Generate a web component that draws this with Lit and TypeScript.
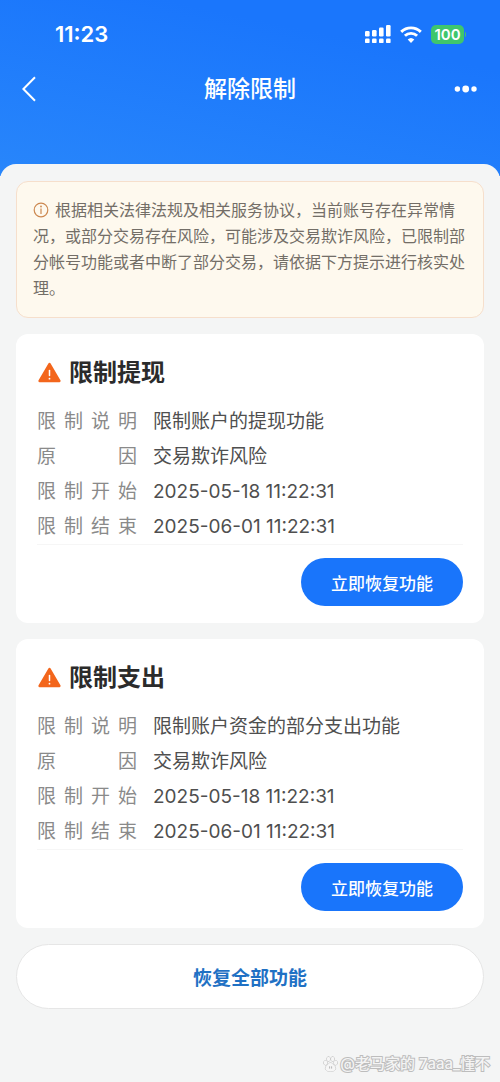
import { LitElement, html, css, svg } from "lit";
import { customElement, property } from "lit/decorators.js";

interface Restriction {
  title: string;
  rows: [string, string][];
}

const restrictions: Restriction[] = [
  {
    title: "限制提现",
    rows: [
      ["限制说明", "限制账户的提现功能"],
      ["原因", "交易欺诈风险"],
      ["限制开始", "2025-05-18 11:22:31"],
      ["限制结束", "2025-06-01 11:22:31"],
    ],
  },
  {
    title: "限制支出",
    rows: [
      ["限制说明", "限制账户资金的部分支出功能"],
      ["原因", "交易欺诈风险"],
      ["限制开始", "2025-05-18 11:22:31"],
      ["限制结束", "2025-06-01 11:22:31"],
    ],
  },
];

@customElement("status-bar")
class StatusBar extends LitElement {
  static styles = css`
    :host {
      display: flex;
      align-items: center;
      justify-content: space-between;
      height: 36px;
      padding: 16px 34px 0 55px;
      color: #fff;
    }
    .time {
      font-size: 22px;
      font-weight: 600;
      line-height: 36px;
    }
    .icons {
      display: flex;
      align-items: center;
    }
    .icons svg {
      display: block;
    }
    .wifi {
      margin: 0 9px;
    }
    .battery {
      display: flex;
      align-items: center;
      gap: 1px;
    }
    .level {
      width: 33px;
      border-radius: 5px;
      background: #3fc66c;
      font-size: 15px;
      font-weight: 600;
      line-height: 19px;
      text-align: center;
    }
    .cap {
      width: 1px;
      height: 5px;
      border-radius: 0 1px 1px 0;
      background: #3fc66c;
    }
  `;

  render() {
    const bars = [0, 1, 2, 3].map(
      (i) => svg`
        <rect x=${i * 7} y=${[6, 5, 2.5, 0][i]} width="4.6" height=${[5.5, 6.5, 9, 11.5][i]} rx="1.2"/>
        <rect x=${i * 7} y="13.5" width="4.6" height="4.6" rx="1.2"/>`
    );
    return html`
      <span class="time">11:23</span>
      <div class="icons">
        <svg width="26" height="19" viewBox="0 0 26 19" fill="#fff" aria-hidden="true">${bars}</svg>
        <svg class="wifi" width="22" height="17" viewBox="0 0 22 17" fill="none" stroke="#fff" stroke-width="2.9" aria-hidden="true">
          <path d="M1.2 5.9a14 14 0 0 1 19.6 0" />
          <path d="M4.9 9.8a8.8 8.8 0 0 1 12.2 0" />
          <path d="M11 17l-3.3-3.6a4.9 4.9 0 0 1 6.6 0z" fill="#fff" stroke="none" />
        </svg>
        <div class="battery"><span class="level">100</span><span class="cap"></span></div>
      </div>
    `;
  }
}

@customElement("restriction-card")
class RestrictionCard extends LitElement {
  @property({ attribute: false }) item!: Restriction;

  static styles = css`
    :host {
      display: block;
      padding: 21px 21px 17px;
      border-radius: 12px;
      background: #fff;
    }
    .title {
      display: flex;
      align-items: center;
      gap: 8px;
      margin: 0 0 13px;
      color: #2b2b2b;
      font-size: 24px;
      font-weight: 700;
      line-height: 36px;
    }
    .rows {
      margin: 0;
      border-bottom: 1px solid #f6f6f6;
    }
    .row {
      display: flex;
      gap: 16px;
      font-size: 19px;
      line-height: 35px;
    }
    .label {
      flex: none;
      width: 100px;
      color: #8a8a8a;
      text-align: justify;
      text-align-last: justify;
    }
    .value {
      margin: 0;
      color: #4f4f4f;
    }
    .actions {
      display: flex;
      justify-content: flex-end;
      padding-top: 13px;
    }
    .restore {
      height: 48px;
      padding: 0 30px;
      border: 0;
      border-radius: 24px;
      background: #1975fb;
      color: #fff;
      font: inherit;
      font-size: 17px;
      font-weight: 500;
    }
  `;

  render() {
    return html`
      <h2 class="title">
        <svg width="24" height="22" viewBox="0 0 24 22" aria-hidden="true">
          <path d="M12.500 2.200L22.300 19H2.700z" fill="#f3661c" stroke="#f3661c" stroke-width="2.6" stroke-linejoin="round" />
          <path d="M12.500 8.4v5.2" stroke="#fff" stroke-width="1.5" stroke-linecap="round" />
          <circle cx="12.500" cy="16.7" r="0.9" fill="#fff" />
        </svg>
        ${this.item.title}
      </h2>
      <dl class="rows">
        ${this.item.rows.map(
          ([label, value]) => html`<div class="row">
            <dt class="label">${label}</dt>
            <dd class="value">${value}</dd>
          </div>`
        )}
      </dl>
      <div class="actions"><button class="restore" type="button">立即恢复功能</button></div>
    `;
  }
}

@customElement("app-root")
class AppRoot extends LitElement {
  static styles = css`
    :host {
      display: flex;
      flex-direction: column;
      min-height: 100vh;
      background: #f4f5f5;
      font-family: Inter, "Noto Sans CJK SC", sans-serif;
    }
    .top {
      padding-bottom: 69px;
      background: linear-gradient(12deg, #2886fb 0%, #1a76fc 75%);
    }
    .nav {
      display: grid;
      grid-template-columns: 1fr auto 1fr;
      align-items: center;
      padding: 19px 22px 0;
      color: #fff;
    }
    .title {
      margin: 0;
      font-size: 23px;
      font-weight: 500;
      line-height: 36px;
    }
    .icon-button {
      display: block;
      padding: 0;
      border: 0;
      background: none;
      color: inherit;
    }
    .icon-button svg {
      display: block;
    }
    .more {
      justify-self: end;
    }
    .sheet {
      display: flex;
      flex: 1;
      flex-direction: column;
      gap: 16px;
      margin-top: -12px;
      padding: 17px 16px 10px;
      border-radius: 16px 16px 0 0;
      background: #f4f5f5;
    }
    .notice {
      margin: 0;
      padding: 15px 16px 16px;
      border: 1px solid #f6dfcc;
      border-radius: 12px;
      background: #fef9ee;
      color: #736e67;
      font-size: 16px;
      line-height: 26px;
    }
    .info {
      margin-right: 6px;
      vertical-align: -2px;
    }
    .restore-all {
      height: 65px;
      border: 1px solid #e6e6e6;
      border-radius: 33px;
      background: #fff;
      color: #1f71c4;
      font: inherit;
      font-size: 19px;
      font-weight: 600;
    }
    .watermark {
      display: flex;
      align-items: center;
      align-self: flex-end;
      gap: 2px;
      margin: auto -6px 0 0;
      color: #f4f4f4;
      font-size: 15px;
      font-weight: 500;
      line-height: 16px;
      -webkit-text-stroke: 2px #bdbdbd;
      paint-order: stroke fill;
    }
  `;

  render() {
    return html`
      <header class="top">
        <status-bar></status-bar>
        <nav class="nav">
          <button class="icon-button" type="button" aria-label="返回">
            <svg width="14" height="26" viewBox="0 0 14 26" fill="none" stroke="#fff" stroke-width="2">
              <path d="M13 1.2L1.4 13L13 24.8" />
            </svg>
          </button>
          <h1 class="title">解除限制</h1>
          <button class="icon-button more" type="button" aria-label="更多">
            <svg width="24" height="8" viewBox="0 0 24 8" fill="#fff">
              <circle cx="3.4" cy="4" r="2.7" />
              <circle cx="11.7" cy="4" r="3.4" />
              <circle cx="20" cy="4" r="2.7" />
            </svg>
          </button>
        </nav>
      </header>
      <main class="sheet">
        <p class="notice"><svg class="info" width="16" height="16" viewBox="0 0 16 16" fill="none" stroke="#cc8850" stroke-width="1.2" aria-hidden="true">
            <circle cx="8" cy="8" r="6.8" />
            <path d="M8 6.6v5.4" />
            <circle cx="8" cy="4.5" r="0.9" fill="#cc8850" stroke="none" />
          </svg>根据相关法律法规及相关服务协议，当前账号存在异常情况，或部分交易存在风险，可能涉及交易欺诈风险，已限制部分帐号功能或者中断了部分交易，请依据下方提示进行核实处理。</p>
        ${restrictions.map((item) => html`<restriction-card .item=${item}></restriction-card>`)}
        <button class="restore-all" type="button">恢复全部功能</button>
        <div class="watermark">
          <svg width="15" height="16" viewBox="0 0 15 16" fill="#f6f6f6" stroke="#b8b8b8" stroke-width="1" aria-hidden="true">
            <ellipse cx="2.5" cy="6.8" rx="1.7" ry="2.2" />
            <ellipse cx="5.5" cy="3" rx="1.6" ry="2.3" />
            <ellipse cx="9.6" cy="3" rx="1.6" ry="2.3" />
            <ellipse cx="12.6" cy="6.8" rx="1.7" ry="2.2" />
            <path d="M7.5 7c-2 0-2.3 1.6-3.7 2.8-1.5 1.3-1.7 2.6-1 3.9.8 1.5 2.7 1.2 4.7 1.2s3.9.3 4.7-1.2c.7-1.3.5-2.6-1-3.9C9.8 8.6 9.5 7 7.5 7z" />
            <path d="M6.6 10.3v2.3M8.6 10.3v2.3" />
          </svg>
          <span>@老马家的 7aaa_懂不</span>
        </div>
      </main>
    `;
  }
}
